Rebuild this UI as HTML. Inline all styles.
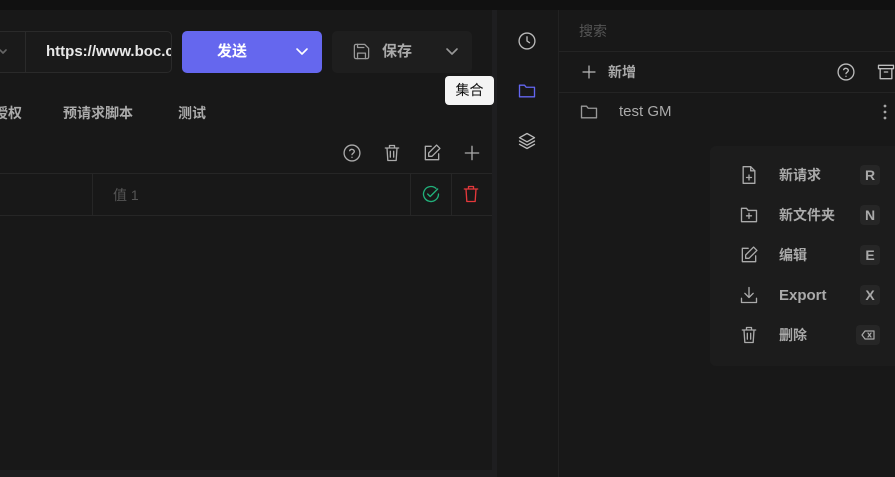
<!DOCTYPE html>
<html><head><meta charset="utf-8"><style>
*{margin:0;padding:0;box-sizing:border-box}
body{width:895px;height:477px;background:#181818;font-family:"Liberation Sans","Noto Sans CJK SC",sans-serif;position:relative;overflow:hidden;color:#bbb}
.a{position:absolute;line-height:20px}
svg{fill:none;stroke:currentColor;stroke-width:1.6;stroke-linecap:round;stroke-linejoin:round}
.b{font-weight:bold}
.kbd{position:absolute;right:25px;top:9px;height:20px;min-width:20px;padding:0 4px;background:#262626;border-radius:4px;color:#aaa;font-weight:bold;font-size:14px;text-align:center;line-height:20px}
</style></head><body>
<div class="a" style="left:0;top:0;width:895px;height:10px;background:#111"></div>
<div class="a" style="left:492px;top:10px;width:5px;height:467px;background:#1e1e20"></div>
<div class="a" style="left:0;top:470px;width:492px;height:7px;background:#1e1e20"></div>
<div class="a" style="left:-10px;top:31px;width:182px;height:42px;border:1px solid #2a2a2a;border-radius:5px;background:#1a1a1a"></div>
<div class="a" style="left:25px;top:31px;width:1px;height:42px;background:#2a2a2a"></div>
<svg class="a" style="left:0;top:48px;color:#666" width="8" height="8" viewBox="0 0 8 8"><path d="M0 2l3 3 3-3"/></svg>
<div class="a b" style="left:46px;top:42px;font-size:15px;color:#e8e8e8;width:125px;overflow:hidden;white-space:nowrap">https://www.boc.cn</div>
<div class="a" style="left:182px;top:31px;width:140px;height:42px;background:#6567ee;border-radius:5px"></div>
<div class="a b" style="left:217px;top:42px;font-size:15px;color:#fff">发送</div>
<svg class="a" style="left:295px;top:47px;color:#fff" width="14" height="10" viewBox="0 0 14 10"><path d="M2 2l5 5 5-5"/></svg>
<div class="a" style="left:332px;top:31px;width:140px;height:42px;background:#1e1e1e;border-radius:5px"></div>
<svg class="a" style="left:352px;top:42px;color:#999" width="19" height="19" viewBox="0 0 24 24"><path d="M5 3h11l5 5v11a2 2 0 0 1-2 2H5a2 2 0 0 1-2-2V5a2 2 0 0 1 2-2z"/><path d="M7 21v-7h10v7M7 3v4h8"/></svg>
<div class="a b" style="left:382px;top:42px;font-size:15px;color:#aaa">保存</div>
<svg class="a" style="left:445px;top:47px;color:#999" width="14" height="10" viewBox="0 0 14 10"><path d="M2 2l5 5 5-5"/></svg>
<div class="a" style="left:445px;top:76px;width:49px;height:29px;background:#f4f4f4;border-radius:4px;color:#111;font-size:14px;text-align:center;line-height:29px">集合</div>
<div class="a b" style="left:-6px;top:103px;font-size:14px;color:#aaa">授权</div>
<div class="a b" style="left:63px;top:103px;font-size:14px;color:#aaa">预请求脚本</div>
<div class="a b" style="left:178px;top:103px;font-size:14px;color:#aaa">测试</div>
<svg class="a" style="left:342px;top:143px;color:#aaa" width="20" height="20" viewBox="0 0 24 24"><circle cx="12" cy="12" r="9.5"/><path d="M9.2 9.2a3 3 0 0 1 5.6 1c0 2-2.8 2.2-2.8 3.8M12 17.2v.1"/></svg>
<svg class="a" style="left:382px;top:143px;color:#aaa" width="20" height="20" viewBox="0 0 24 24"><path d="M4 6h16M9 6V3h6v3M6 6l1 15h10l1-15M10 10v7M14 10v7"/></svg>
<svg class="a" style="left:422px;top:143px;color:#aaa" width="20" height="20" viewBox="0 0 24 24"><path d="M11 4H4v16h16v-7"/><path d="M17.5 2.5l4 4L12 16H8v-4z"/></svg>
<svg class="a" style="left:462px;top:143px;color:#aaa" width="20" height="20" viewBox="0 0 24 24"><path d="M12 4v16M4 12h16"/></svg>
<div class="a" style="left:0;top:173px;width:492px;height:1px;background:#262626"></div>
<div class="a" style="left:0;top:215px;width:492px;height:1px;background:#262626"></div>
<div class="a" style="left:92px;top:173px;width:1px;height:42px;background:#262626"></div>
<div class="a" style="left:410px;top:173px;width:1px;height:42px;background:#262626"></div>
<div class="a" style="left:451px;top:173px;width:1px;height:42px;background:#262626"></div>
<div class="a" style="left:113px;top:185px;font-size:14px;color:#555">值 1</div>
<svg class="a" style="left:421px;top:184px;color:#21b07a" width="20" height="20" viewBox="0 0 24 24"><path d="M21 12a9 9 0 1 1-3-6.7"/><path d="M8 12l3 3 9-9"/></svg>
<svg class="a" style="left:461px;top:184px;color:#e5383b" width="20" height="20" viewBox="0 0 24 24"><path d="M4 6h16M9 6V3h6v3M6 6l1 15h10l1-15"/></svg>
<div class="a" style="left:558px;top:10px;width:1px;height:467px;background:#222"></div>
<svg class="a" style="left:517px;top:31px;color:#bbb" width="20" height="20" viewBox="0 0 24 24"><circle cx="12" cy="12" r="9.5"/><path d="M12 7v5l3 2"/></svg>
<svg class="a" style="left:517px;top:81px;color:#6366f1" width="20" height="20" viewBox="0 0 24 24"><path d="M3 5h6l2 2.5h10V19H3z"/></svg>
<svg class="a" style="left:517px;top:131px;color:#bbb" width="20" height="20" viewBox="0 0 24 24"><path d="M12 3l9 5-9 5-9-5z"/><path d="M3 12l9 5 9-5M3 16l9 5 9-5"/></svg>
<div class="a" style="left:579px;top:21px;font-size:14px;color:#555">搜索</div>
<div class="a" style="left:559px;top:51px;width:336px;height:1px;background:#242424"></div>
<svg class="a" style="left:580px;top:63px;color:#bbb" width="18" height="18" viewBox="0 0 24 24"><path d="M12 4v16M4 12h16"/></svg>
<div class="a b" style="left:608px;top:62px;font-size:14px;color:#aaa">新增</div>
<svg class="a" style="left:836px;top:62px;color:#bbb" width="20" height="20" viewBox="0 0 24 24"><circle cx="12" cy="12" r="9.5"/><path d="M9.2 9.2a3 3 0 0 1 5.6 1c0 2-2.8 2.2-2.8 3.8M12 17.2v.1"/></svg>
<svg class="a" style="left:876px;top:62px;color:#bbb" width="20" height="20" viewBox="0 0 24 24"><path d="M3 4h18v4H3zM5 8v12h14V8M10 12h4"/></svg>
<div class="a" style="left:559px;top:92px;width:336px;height:1px;background:#242424"></div>
<svg class="a" style="left:579px;top:102px;color:#999" width="20" height="20" viewBox="0 0 24 24"><path d="M3 5h6l2 2.5h10V19H3z"/></svg>
<div class="a" style="left:619px;top:102px;font-size:15px;color:#aaa">test GM</div>
<svg class="a" style="left:880px;top:102px;color:#aaa" width="10" height="20" viewBox="0 0 10 20"><circle cx="5" cy="4" r=".6"/><circle cx="5" cy="10" r=".6"/><circle cx="5" cy="16" r=".6"/></svg>
<div class="a" style="left:710px;top:146px;width:195px;height:220px;background:#1c1c1c;border-radius:6px">
 <svg class="a" style="left:29px;top:19px;color:#aaa" width="20" height="20" viewBox="0 0 24 24"><path d="M5 2h9l5 5v15H5z"/><path d="M14 2v5h5M12 12v6M9 15h6"/></svg>
 <div class="a b" style="left:69px;top:19px;font-size:14px;color:#aaa">新请求</div><div class="kbd" style="top:19px">R</div>
 <svg class="a" style="left:29px;top:59px;color:#aaa" width="20" height="20" viewBox="0 0 24 24"><path d="M3 4h6l2 2.5h10V20H3z"/><path d="M12 10v6M9 13h6"/></svg>
 <div class="a b" style="left:69px;top:59px;font-size:14px;color:#aaa">新文件夹</div><div class="kbd" style="top:59px">N</div>
 <svg class="a" style="left:29px;top:99px;color:#aaa" width="20" height="20" viewBox="0 0 24 24"><path d="M11 4H4v16h16v-7"/><path d="M17.5 2.5l4 4L12 16H8v-4z"/></svg>
 <div class="a b" style="left:69px;top:99px;font-size:14px;color:#aaa">编辑</div><div class="kbd" style="top:99px">E</div>
 <svg class="a" style="left:29px;top:139px;color:#aaa" width="20" height="20" viewBox="0 0 24 24"><path d="M12 3v12M7 10l5 5 5-5M3 16v5h18v-5"/></svg>
 <div class="a b" style="left:69px;top:140px;font-size:15px;color:#aaa">Export</div><div class="kbd" style="top:139px">X</div>
 <svg class="a" style="left:29px;top:179px;color:#aaa" width="20" height="20" viewBox="0 0 24 24"><path d="M4 6h16M9 6V3h6v3M6 6l1 15h10l1-15M10 10v7M14 10v7"/></svg>
 <div class="a b" style="left:69px;top:179px;font-size:14px;color:#aaa">删除</div>
 <div class="kbd" style="top:179px;width:24px;padding:0"><svg width="14" height="12" viewBox="0 0 14 12" style="margin-top:4px;stroke-width:1.2"><path d="M4 2h9v8H4L1 6z"/><path d="M7 4l3 4M10 4l-3 4"/></svg></div>
</div>
</body></html>
